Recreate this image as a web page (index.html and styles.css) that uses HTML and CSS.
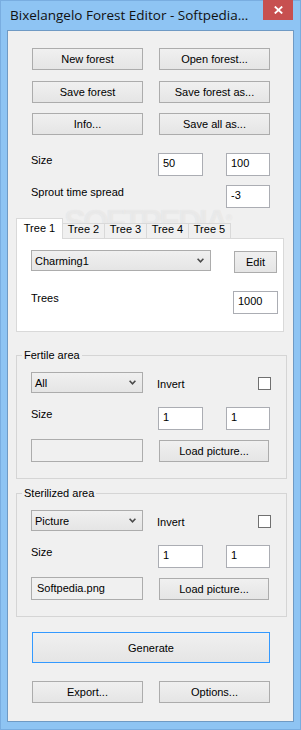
FILE: index.html
```html
<!DOCTYPE html>
<html lang="en">
<head>
    <meta charset="UTF-8">
    <title>Bixelangelo Forest Editor</title>
    <link rel="stylesheet" href="styles.css">
</head>
<body>
<div class="window">
    <div class="titlebar">
        <span class="title">Bixelangelo Forest Editor - Softpedia…</span>
        <span class="close">
            <svg width="9" height="8" viewBox="0 0 9 8"><path d="M0.8 0.5 L8.2 7.5 M8.2 0.5 L0.8 7.5" stroke="#fff" stroke-width="1.8" fill="none"/></svg>
        </span>
    </div>
    <div class="client">
        <div class="buttons">
            <button class="btn">New forest</button>
            <button class="btn">Open forest...</button>
            <button class="btn">Save forest</button>
            <button class="btn">Save forest as...</button>
            <button class="btn">Info...</button>
            <button class="btn">Save all as...</button>
        </div>

        <div class="row size-row">
            <span class="label">Size</span>
            <span class="edit col2">50</span>
            <span class="edit col4">100</span>
        </div>
        <div class="row sprout-row">
            <span class="label">Sprout time spread</span>
            <span class="edit col4">-3</span>
        </div>

        <div class="tabs">
            <div class="tab-strip">
                <span class="tab active">Tree 1</span>
                <span class="tab">Tree 2</span>
                <span class="tab">Tree 3</span>
                <span class="tab">Tree 4</span>
                <span class="tab">Tree 5</span>
            </div>
            <div class="tab-panel">
                <div class="combo-row">
                    <div class="combo wide">
                        <span>Charming1</span>
                        <svg width="7" height="5" viewBox="0 0 7 5"><polyline points="0.6,0.8 3.5,3.8 6.4,0.8" stroke="#4a4a4a" stroke-width="1.6" fill="none"/></svg>
                    </div>
                    <button class="btn edit-btn">Edit</button>
                </div>
                <div class="trees-row">
                    <span class="label">Trees</span>
                    <span class="edit trees">1000</span>
                </div>
            </div>
        </div>

        <fieldset class="group">
            <legend>Fertile area</legend>
            <div class="group-body">
                <div class="grow">
                    <div class="combo">
                        <span>All</span>
                        <svg width="7" height="5" viewBox="0 0 7 5"><polyline points="0.6,0.8 3.5,3.8 6.4,0.8" stroke="#4a4a4a" stroke-width="1.6" fill="none"/></svg>
                    </div>
                    <span class="label invert">Invert</span>
                    <span class="check"></span>
                </div>
                <div class="grow size">
                    <span class="label">Size</span>
                    <span class="edit col2">1</span>
                    <span class="edit col4">1</span>
                </div>
                <div class="grow pic">
                    <span class="field"></span>
                    <button class="btn load">Load picture...</button>
                </div>
            </div>
        </fieldset>

        <fieldset class="group sterile">
            <legend>Sterilized area</legend>
            <div class="group-body">
                <div class="grow">
                    <div class="combo">
                        <span>Picture</span>
                        <svg width="7" height="5" viewBox="0 0 7 5"><polyline points="0.6,0.8 3.5,3.8 6.4,0.8" stroke="#4a4a4a" stroke-width="1.6" fill="none"/></svg>
                    </div>
                    <span class="label invert">Invert</span>
                    <span class="check"></span>
                </div>
                <div class="grow size">
                    <span class="label">Size</span>
                    <span class="edit col2">1</span>
                    <span class="edit col4">1</span>
                </div>
                <div class="grow pic">
                    <span class="field">Softpedia.png</span>
                    <button class="btn load">Load picture...</button>
                </div>
            </div>
        </fieldset>

        <button class="btn generate">Generate</button>

        <div class="buttons bottom">
            <button class="btn">Export...</button>
            <button class="btn">Options...</button>
        </div>
    </div>
    <div class="watermark">SOFTPEDIA<sup>®</sup></div>
</div>
</body>
</html>
```

FILE: styles.css
```css
*{
    box-sizing: border-box;
}
body{
    margin: 0;
    font-family: "Liberation Sans", Arial, sans-serif;
    font-size: 11px;
    color: #000;
}
.window{
    position: relative;
    width: 301px;
    height: 730px;
    background: #8ec4f3;
    box-shadow: inset 0 0 0 1px #79ade0;
    display: flex;
    flex-direction: column;
}
.titlebar{
    height: 30px;
    display: flex;
    align-items: flex-start;
}
.title{
    font-family: "Open Sans", "Liberation Sans", sans-serif;
    font-size: 13.5px;
    line-height: 18px;
    padding: 6px 0 0 10px;
    color: #111;
}
.close{
    margin-left: auto;
    margin-right: 8px;
    width: 30px;
    height: 20px;
    background: #c75050;
    display: flex;
    align-items: center;
    justify-content: center;
}
.client{
    margin: 0 7px;
    height: 692px;
    border: 1px solid #6f9ac4;
    background: #f0f0f0;
    display: flex;
    flex-direction: column;
}

/* buttons */
.btn{
    font: inherit;
    color: #000;
    padding: 0;
    border: 1px solid #acacac;
    background: linear-gradient(#f0f0f0, #e5e5e5);
}
.buttons{
    display: grid;
    grid-template-columns: 111px 111px;
    grid-auto-rows: 22px;
    column-gap: 16px;
    row-gap: 10.5px;
    margin: 17px 0 0 24px;
}
.buttons.bottom{
    margin-top: 18px;
}
.generate{
    margin: 15px 0 0 24px;
    width: 238px;
    height: 31px;
    border-color: #3399ff;
}

/* label + edit rows */
.row, .grow{
    display: grid;
    grid-template-columns: 127px 45px 23px 44px;
    height: 23px;
}
.row{
    margin-left: 23px;
}
.size-row{
    margin-top: 18px;
}
.sprout-row{
    margin-top: 9px;
}
.label{
    grid-column: 1;
    line-height: 13px;
    padding-top: 1px;
}
.edit{
    height: 23px;
    background: #fff;
    border: 1px solid #abadb3;
    padding-left: 4px;
    line-height: 19px;
}
.col2{
    grid-column: 2;
}
.col4{
    grid-column: 4;
}

/* tabs */
.tabs{
    margin-top: 10px;
}
.tab-strip{
    position: relative;
    z-index: 1;
    display: flex;
    align-items: flex-end;
    height: 20px;
    margin-left: 8px;
}
.tab{
    width: 43px;
    height: 15px;
    margin-left: -1px;
    border: 1px solid #d9d9d9;
    border-bottom: 0;
    background: #f0f0f0;
    text-align: center;
    line-height: 11px;
}
.tab.active{
    width: 47px;
    height: 21px;
    margin-left: 0;
    margin-bottom: -1px;
    padding-top: 2px;
    line-height: 14px;
    background: #fff;
    position: relative;
}
.tab-panel{
    margin-left: 8px;
    width: 268px;
    height: 94px;
    border: 1px solid #d9d9d9;
    background: #fff;
    padding: 11px 0 0 14px;
}
.combo-row{
    display: flex;
    align-items: flex-start;
}
.combo{
    width: 112px;
    height: 21px;
    border: 1px solid #acacac;
    background: linear-gradient(#f0f0f0, #e5e5e5);
    display: flex;
    align-items: center;
    justify-content: space-between;
    padding: 0 6px 0 3px;
}
.combo.wide{
    width: 180px;
}
.edit-btn{
    margin: 1px 0 0 23px;
    width: 43px;
    height: 22px;
}
.trees-row{
    display: flex;
    margin-top: 18px;
}
.trees-row .label{
    flex: 1;
}
.edit.trees{
    width: 45px;
    margin-right: 5px;
}

/* group boxes */
.group{
    margin: 16px 0 0 8px;
    width: 271px;
    padding: 0;
    border: 1px solid #d5d5d5;
}
.group.sterile{
    margin-top: 7px;
}
.group legend{
    margin-left: 5px;
    padding: 0 2px;
    line-height: 14px;
}
.group-body{
    padding: 10px 0 16px 14px;
}
.invert{
    grid-column: 2 / 4;
    margin: 5px 0 0 -1px;
}
.check{
    grid-column: 4;
    justify-self: end;
    width: 13px;
    height: 13px;
    margin: 5px -1px 0 0;
    border: 1px solid #707070;
    background: #fff;
}
.grow.size{
    margin-top: 12px;
}
.grow.pic{
    margin-top: 9px;
}
.field{
    width: 112px;
    height: 23px;
    border: 1px solid #acacac;
    background: #f0f0f0;
    padding-left: 5px;
    line-height: 20px;
}
.load{
    grid-column: 2 / 5;
    width: 110px;
    height: 22px;
    margin: 1px 0 0 1px;
}

.watermark{
    position: absolute;
    left: 64px;
    top: 203px;
    font-weight: bold;
    font-size: 33px;
    letter-spacing: -3px;
    color: rgba(255, 255, 255, 0.35);
    text-shadow: 0 0 1px rgba(0, 0, 0, 0.08);
    pointer-events: none;
}
.watermark sup{
    font-size: 9px;
    letter-spacing: 0;
}
```
